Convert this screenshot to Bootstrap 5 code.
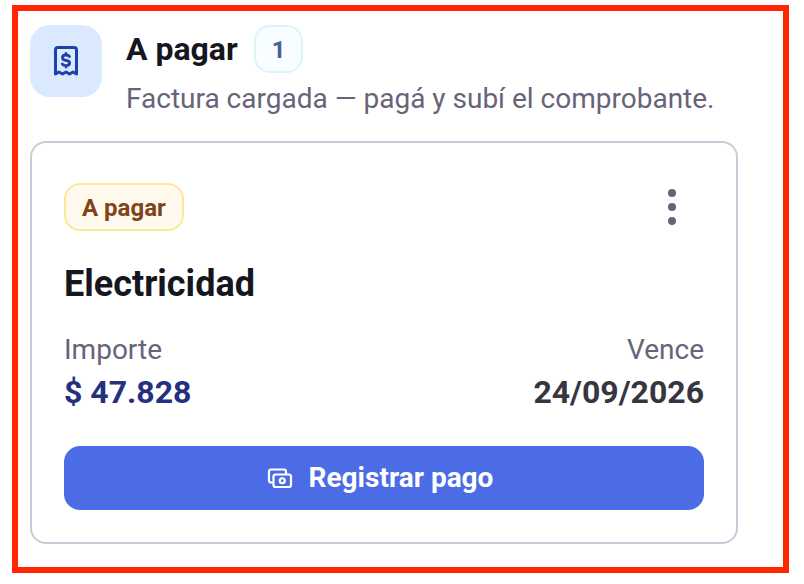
<!DOCTYPE html>
<html lang="es">
<head>
<meta charset="utf-8">
<meta name="viewport" content="width=device-width, initial-scale=1">
<title>A pagar</title>
<link href="https://cdn.jsdelivr.net/npm/bootstrap@5.3.0/dist/css/bootstrap.min.css" rel="stylesheet">
<style>
  body { font-family: Roboto, "Noto Sans", sans-serif; font-size: 28px; line-height: 40px; color: #15161e; background: #fff; }
  .frame { border: 6px solid #ff2600; margin: 5px 15px 11px 12px; padding: 14px 45px 23px 12px; }
  .tile { width: 72px; height: 72px; border-radius: 20px; background: #dbe9ff; color: #1e40af; }
  .heading { font-size: 32px; line-height: 48px; font-weight: 700; }
  .subtitle { margin: 6px 0 0; }
  .section-head { margin-bottom: 22px; }
  .pill { height: 48px; padding: 0 16px; border: 2px solid; border-radius: 16px; font-size: 24px; line-height: 46px; font-weight: 700; }
  .pill-count { color: #4a5f96; background: #f8fdff; border-color: #def4fb; }
  .pill-due { color: #81431a; background: #fffaed; border-color: #fbe99a; }
  .muted { color: #67647a; }
  .bill { border: 2px solid #cbc9d8; border-radius: 16px; padding: 40px 32px 32px; }
  .bill-title { font-size: 36px; line-height: 48px; font-weight: 700; margin: 29px 0 22px; }
  .figure-text { font-size: 32px; line-height: 44px; font-weight: 700; }
  .amount { color: #25317f; }
  .date { color: #373640; }
  .more { width: 64px; height: 48px; color: #67647a; }
  .pay { height: 64px; border-radius: 16px; background: #4b6ce4; font-size: 28px; line-height: 40px; font-weight: 700; gap: 16px; }
  .pay:hover { background: #3f5fd6; }
</style>
</head>
<body>
<main class="frame">
  <header class="section-head d-flex align-items-start gap-4">
    <div class="tile d-flex align-items-center justify-content-center flex-shrink-0">
      <svg width="32" height="32" viewBox="0 0 32 32" fill="none" stroke="currentColor" stroke-width="3" stroke-linejoin="round" stroke-linecap="round" aria-hidden="true">
        <path d="M5.500 29V5Q5.500 2.500 8 2.500H24Q26.500 2.500 26.500 5V29L23 27L19.500 29L16 27L12.500 29L9 27Z"/>
        <path stroke-width="2.800" d="M19.500 11.500Q18.500 10 16 10C11.300 10 11.300 14.800 16 15.300C21 15.800 20.700 20.600 16 20.600Q13.300 20.600 12.300 19M16 8.500V10M16 20.800V22"/>
      </svg>
    </div>
    <div>
      <div class="d-flex align-items-center gap-3">
        <h1 class="heading m-0">A pagar</h1>
        <span class="pill pill-count">1</span>
      </div>
      <p class="subtitle muted">Factura cargada — pagá y subí el comprobante.</p>
    </div>
  </header>
  <article class="bill">
    <div class="d-flex justify-content-between align-items-center">
      <span class="pill pill-due">A pagar</span>
      <button type="button" class="more btn p-0 border-0 d-flex align-items-center justify-content-center" aria-label="Más opciones">
        <svg width="8" height="36" viewBox="0 0 8 36" fill="currentColor" aria-hidden="true"><circle cx="4" cy="4" r="4"/><circle cx="4" cy="18" r="4"/><circle cx="4" cy="32" r="4"/></svg>
      </button>
    </div>
    <h2 class="bill-title">Electricidad</h2>
    <div class="d-flex justify-content-between mb-4 pb-2">
      <div>
        <div class="muted">Importe</div>
        <div class="figure-text amount">$ 47.828</div>
      </div>
      <div class="text-end">
        <div class="muted">Vence</div>
        <div class="figure-text date">24/09/2026</div>
      </div>
    </div>
    <button type="button" class="pay btn w-100 py-0 ps-0 pe-2 border-0 text-white d-flex align-items-center justify-content-center">
      <svg width="26" height="22" viewBox="0 0 26 22" fill="none" stroke="currentColor" stroke-width="2.200" stroke-linejoin="round" aria-hidden="true">
        <rect x="6.500" y="7.500" width="17.500" height="12.500" rx="2"/>
        <path d="M6.500 15.500H4Q2 15.500 2 13.500V4.500Q2 2.500 4 2.500H17Q19 2.500 19 4.500V7.500"/>
        <circle cx="15.250" cy="13.750" r="2.500"/>
      </svg>
      <span>Registrar pago</span>
    </button>
  </article>
</main>
<script src="https://cdn.jsdelivr.net/npm/bootstrap@5.3.0/dist/js/bootstrap.bundle.min.js"></script>
</body>
</html>
